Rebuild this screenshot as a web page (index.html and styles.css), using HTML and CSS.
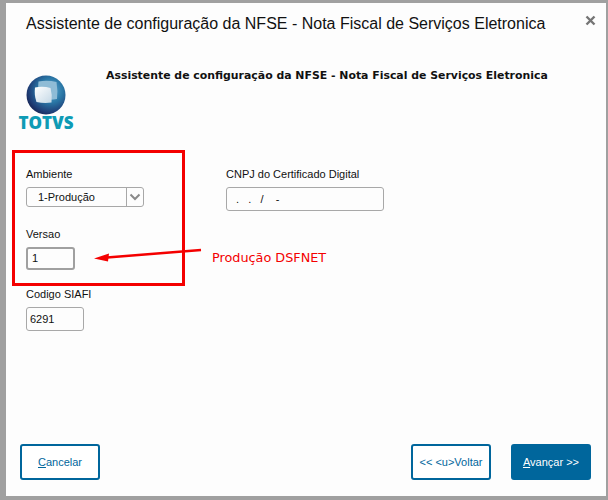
FILE: index.html
```html
<!DOCTYPE html>
<html lang="pt-BR">
<head>
  <meta charset="UTF-8">
  <title>Assistente de configuração da NFSE</title>
  <link rel="stylesheet" href="styles.css">
</head>
<body>
  <div class="dialog">
    <header class="dialog-header">
      <h1>Assistente de configuração da NFSE - Nota Fiscal de Serviços Eletronica</h1>
      <button class="close" aria-label="Fechar">
        <svg width="11" height="11" viewBox="0 0 11 11"><path d="M1.500 1.500l8 8M9.500 1.500l-8 8" stroke="#757575" stroke-width="2.400" fill="none"/></svg>
      </button>
    </header>

    <div class="intro">
      <div class="logo">
        <svg width="40" height="40" viewBox="0 0 40 40">
          <defs>
            <radialGradient id="globe" cx="0.62" cy="0.38" r="0.7">
              <stop offset="0" stop-color="#5fa9d0"/>
              <stop offset="0.45" stop-color="#2a77a6"/>
              <stop offset="0.8" stop-color="#1f3f78"/>
              <stop offset="1" stop-color="#16204f"/>
            </radialGradient>
            <linearGradient id="sheet" x1="0" y1="0" x2="1" y2="1">
              <stop offset="0" stop-color="#ffffff"/>
              <stop offset="1" stop-color="#c4d8e6"/>
            </linearGradient>
          </defs>
          <circle cx="20" cy="20" r="19.500" fill="url(#globe)"/>
          <path d="M12.500 6.500q9-1.500 18 .5q1.500 9 .5 17q-8 1.500-17-.5q-2.500-8-1.500-17z" fill="#8fbcd6"/>
          <path d="M9 12.500q8-1.500 15.500 .5q2 7 1 14.500q-7 1.200-15-.5q-2.500-7-1.500-14.500z" fill="url(#sheet)"/>
        </svg>
        <span class="logo-name">TOTVS</span>
      </div>
      <h2>Assistente de configuração da NFSE - Nota Fiscal de Serviços Eletronica</h2>
    </div>

    <form class="form">
      <div class="col col-left">
        <div class="field">
          <label>Ambiente</label>
          <div class="select">
            <span class="select-value">1-Produção</span>
            <span class="select-arrow">
              <svg width="12" height="8" viewBox="0 0 12 8"><path d="M1.500 1.500l4.500 4.500l4.500-4.500" stroke="#8a8a8a" stroke-width="2" fill="none"/></svg>
            </span>
          </div>
        </div>
        <div class="field field-versao">
          <label>Versao</label>
          <div class="input input-versao">1</div>
        </div>
        <div class="field field-siafi">
          <label>Codigo SIAFI</label>
          <div class="input input-siafi">6291</div>
        </div>
      </div>
      <div class="col col-right">
        <div class="field">
          <label>CNPJ do Certificado Digital</label>
          <div class="input input-cnpj">.&nbsp;&nbsp;&nbsp;.&nbsp;&nbsp;&nbsp;/&nbsp;&nbsp;&nbsp;&nbsp;-</div>
        </div>
      </div>
    </form>

    <footer class="actions">
      <button class="btn"><span><u>C</u>ancelar</span></button>
      <div class="actions-right">
        <button class="btn">&lt;&lt; &lt;u&gt;Voltar</button>
        <button class="btn btn-primary"><span><u>A</u>vançar &gt;&gt;</span></button>
      </div>
    </footer>

    <!-- anotacao em vermelho por cima da tela -->
    <div class="mark-box"></div>
    <svg class="mark-arrow" width="112" height="16" viewBox="0 0 112 16">
      <path d="M108 3L14 10.500" stroke="#f40000" stroke-width="2.500" fill="none"/>
      <path d="M1 11.500L16 6.500L15 14.500z" fill="#f40000"/>
    </svg>
    <span class="mark-text">Produção DSFNET</span>
  </div>
</body>
</html>
```

FILE: styles.css
```css
* {
  margin: 0;
  padding: 0;
  box-sizing: border-box;
}

html, body {
  height: 500px;
}

body {
  background: #a0a0a0;
  font-family: "Liberation Sans", Arial, sans-serif;
  overflow: hidden;
  padding: 3px 2px 4px 6px;
}

.dialog {
  position: relative;
  display: flex;
  flex-direction: column;
  height: 100%;
  background: #fdfdfd;
  color: #111;
}

.dialog-header {
  display: flex;
  justify-content: space-between;
  padding: 11px 10px 0 20px;
  height: 53px;
}

.dialog-header h1 {
  font-size: 16px;
  font-weight: 400;
  line-height: 20px;
  white-space: nowrap;
}

.close {
  background: none;
  border: none;
  height: 11px;
  margin-top: 1px;
}

.close svg {
  display: block;
}

.intro {
  display: flex;
  padding-left: 13px;
  height: 111px;
}

.logo {
  width: 54px;
  display: flex;
  flex-direction: column;
  align-items: center;
  padding-top: 19px;
}

.logo svg {
  display: block;
}

.logo-name {
  font-family: "Open Sans", sans-serif;
  font-weight: 800;
  font-size: 17px;
  line-height: 16px;
  color: #0e9bb5;
}

.intro h2 {
  margin-left: 33px;
  font-family: "DejaVu Sans", Verdana, sans-serif;
  font-size: 10.900px;
  font-weight: 700;
  line-height: 14px;
  white-space: nowrap;
  padding-top: 13px;
}

.form {
  display: flex;
  padding-left: 20px;
}

.col-left {
  width: 200px;
}

.field label {
  display: block;
  font-size: 11px;
  line-height: 14px;
  margin-bottom: 6px;
}

.field-versao {
  margin-top: 20px;
}

.field-siafi {
  margin-top: 17px;
}

.select {
  display: flex;
  width: 118px;
  height: 20px;
  border: 1px solid #a8a8a8;
  border-radius: 3px;
  font-size: 11px;
  line-height: 18px;
}

.select-value {
  flex: 1;
  padding-left: 11px;
}

.select-arrow {
  width: 17px;
  border-left: 1px solid #a8a8a8;
  display: flex;
  align-items: center;
  justify-content: center;
}

.input {
  border: 1px solid #a8a8a8;
  border-radius: 3px;
  font-size: 11px;
  line-height: 22px;
  height: 24px;
  padding-left: 3px;
}

.input-versao {
  width: 49px;
  height: 23px;
  border: 2px solid #a0a0a0;
  line-height: 19px;
  padding-left: 4px;
}

.input-siafi {
  width: 58px;
}

.input-cnpj {
  width: 158px;
  padding-left: 9px;
}

.actions {
  display: flex;
  justify-content: space-between;
  margin-top: auto;
  padding: 0 15px 16px 14px;
}

.actions-right {
  display: flex;
  gap: 20px;
}

.btn {
  width: 80px;
  height: 36px;
  background: #fff;
  border: 2px solid #00669c;
  border-radius: 3px;
  color: #00669c;
  font-family: inherit;
  font-size: 11px;
}

.btn-primary {
  background: #00669c;
  color: #fff;
}

.mark-box {
  position: absolute;
  left: 6px;
  top: 147px;
  width: 173px;
  height: 136px;
  border: 3px solid #f40000;
}

.mark-arrow {
  position: absolute;
  left: 87px;
  top: 244px;
}

.mark-text {
  position: absolute;
  left: 206px;
  top: 247px;
  font-family: "DejaVu Sans", sans-serif;
  font-size: 12.800px;
  line-height: 16px;
  color: #f40000;
}
```
